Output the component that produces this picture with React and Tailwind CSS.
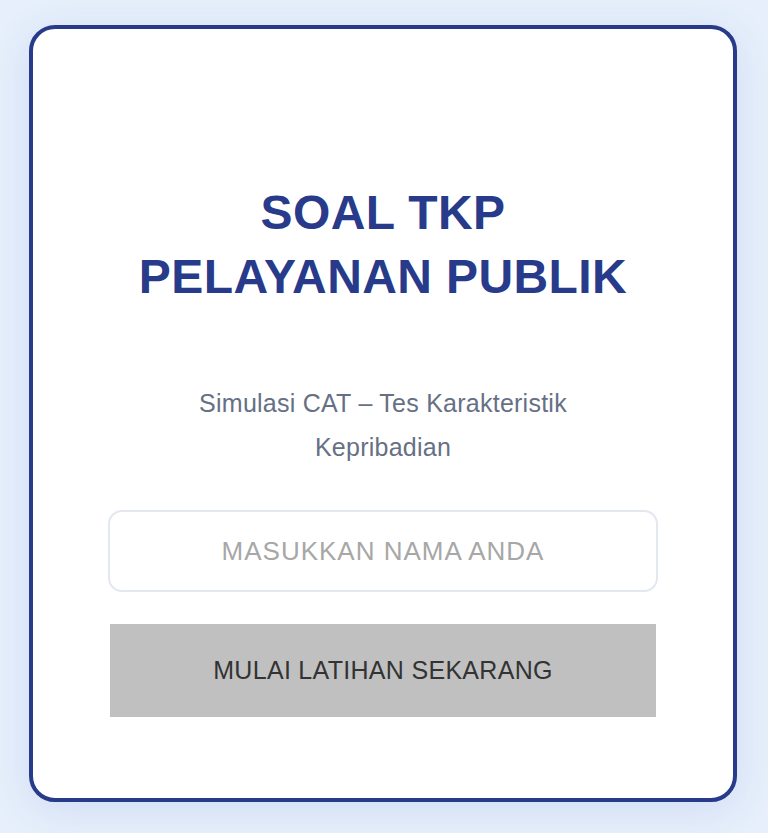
import React from "react";

export default function App() {
  return (
    <div
      className="min-h-[833px] w-full bg-[#e6effb] pt-[25px] pb-[31px]"
      style={{ fontFamily: '"Liberation Sans", Arial, Helvetica, sans-serif' }}
    >
      <div className="ml-[29px] flex w-[708px] flex-col rounded-[26px] border-4 border-[#283b8b] bg-white px-[75px] pt-[152px] pb-[81px] shadow-[0_8px_40px_rgba(60,100,200,0.12)]">
        <h1 className="text-center text-[48px] font-bold leading-[64px] tracking-[0.4px] text-[#283b8b]">
          SOAL TKP
          <br />
          PELAYANAN PUBLIK
        </h1>
        <p className="mx-auto mt-[72px] max-w-[420px] text-center text-[25px] leading-[44px] tracking-[0.25px] text-[#667085]">
          Simulasi CAT – Tes Karakteristik Kepribadian
        </p>
        <input
          type="text"
          placeholder="MASUKKAN NAMA ANDA"
          className="mt-[41px] h-[82px] w-full rounded-[14px] border-2 border-[#e3e7f0] bg-white px-4 text-center text-[26px] tracking-[1px] text-[#333] outline-none placeholder:text-[#a7a7a7]"
          style={{ fontFamily: '"Liberation Sans", Arial, Helvetica, sans-serif' }}
        />
        <button
          type="button"
          className="mx-[2px] mt-[32px] h-[93px] bg-[#c0c0c0] text-[25px] tracking-[0.3px] text-[#333333]"
          style={{ fontFamily: '"Liberation Sans", Arial, Helvetica, sans-serif' }}
        >
          MULAI LATIHAN SEKARANG
        </button>
      </div>
    </div>
  );
}
